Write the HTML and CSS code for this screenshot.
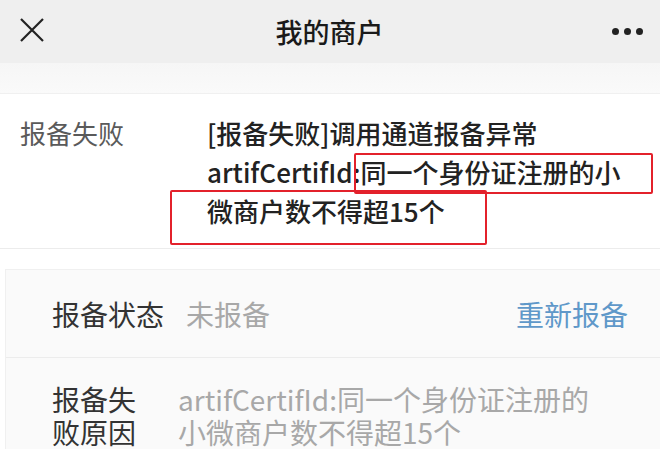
FILE: index.html
```html
<!DOCTYPE html>
<html lang="zh-CN">
<head>
    <meta charset="UTF-8">
    <meta name="viewport" content="width=device-width, initial-scale=1.0">
    <title>我的商户</title>
    <link rel="stylesheet" href="styles.css">
</head>
<body>
    <div class="navbar">
        <svg class="nav-close" width="26" height="26" viewBox="0 0 26 26">
            <path d="M2 2 L24 24 M24 2 L2 24" stroke="#222" stroke-width="2.2" fill="none"/>
        </svg>
        <div class="nav-title">我的商户</div>
        <div class="nav-more">
            <span></span><span></span><span></span>
        </div>
    </div>
    <div class="band"></div>

    <div class="result">
        <div class="result-label">报备失败</div>
        <div class="result-text">
            [报备失败]调用通道报备异常<br>
            artifCertifId:同一个身份证注册的小<br>
            微商户数不得超15个
        </div>
        <!-- annotation boxes from the screenshot -->
        <div class="mark mark-1"></div>
        <div class="mark mark-2"></div>
    </div>

    <div class="card">
        <div class="card-row">
            <span class="row-label">报备状态</span>
            <span class="row-value">未报备</span>
            <a class="row-action" href="#">重新报备</a>
        </div>
        <div class="card-row card-row-reason">
            <span class="row-label row-label-narrow">报备失败原因</span>
            <span class="row-value row-value-wrap">artifCertifId:同一个身份证注册的小微商户数不得超15个</span>
        </div>
    </div>
</body>
</html>
```

FILE: styles.css
```css
body {
    margin: 0;
    font-family: "Noto Sans CJK SC", "Noto Sans", sans-serif;
    background: #fff;
    color: #333;
    width: 660px;
    height: 456px;
    overflow: hidden;
}

.navbar {
    height: 63px;
    background-color: #efefef;
    display: flex;
    align-items: center;
    justify-content: space-between;
    padding: 0 17px 0 19px;
    box-sizing: border-box;
}

.nav-close {
    display: block;
    margin-top: -3px;
}

.nav-title {
    font-size: 27px;
    font-weight: 500;
    color: #1a1a1a;
    margin-left: 2px;
}

.nav-more {
    display: flex;
    gap: 5px;
}

.nav-more span {
    width: 7px;
    height: 7px;
    border-radius: 50%;
    background: #222;
}

.band {
    height: 30px;
    background: linear-gradient(180deg, #f6f6f6, #fafafa);
    border-bottom: 1px solid #f0f0f0;
}

.result {
    position: relative;
    display: flex;
    padding: 19px 0 18px 20px;
    border-bottom: 1px solid #ececec;
    font-size: 26px;
    line-height: 39px;
}

.result-label {
    width: 187px;
    flex-shrink: 0;
    color: #5a5a5a;
}

.result-text {
    color: #222;
    font-weight: 500;
}

.mark {
    position: absolute;
    border: 2px solid #e3212b;
    border-radius: 2px;
}

.mark-1 {
    left: 354px;
    top: 59px;
    width: 295px;
    height: 37px;
}

.mark-2 {
    left: 170px;
    top: 96px;
    width: 313px;
    height: 51px;
}

.card {
    margin: 20px 0 0 5px;
    background-color: #fafafa;
    border-top: 1px solid #f0f0f0;
    border-left: 1px solid #f0f0f0;
}

.card-row {
    display: flex;
    align-items: center;
    padding: 0 32px 0 46px;
    height: 87px;
    font-size: 28px;
    border-bottom: 1px solid #ececec;
}

.row-label {
    color: #333;
    flex-shrink: 0;
}

.row-value {
    color: #a8a8a8;
    margin-left: 22px;
}

.row-action {
    margin-left: auto;
    color: #5f98c9;
    text-decoration: none;
}

.card-row-reason {
    align-items: flex-start;
    height: auto;
    padding-top: 25px;
    border-bottom: none;
    line-height: 33px;
}

.row-label-narrow {
    width: 86px;
}

.row-value-wrap {
    margin-left: 40px;
    width: 432px;
}
```
